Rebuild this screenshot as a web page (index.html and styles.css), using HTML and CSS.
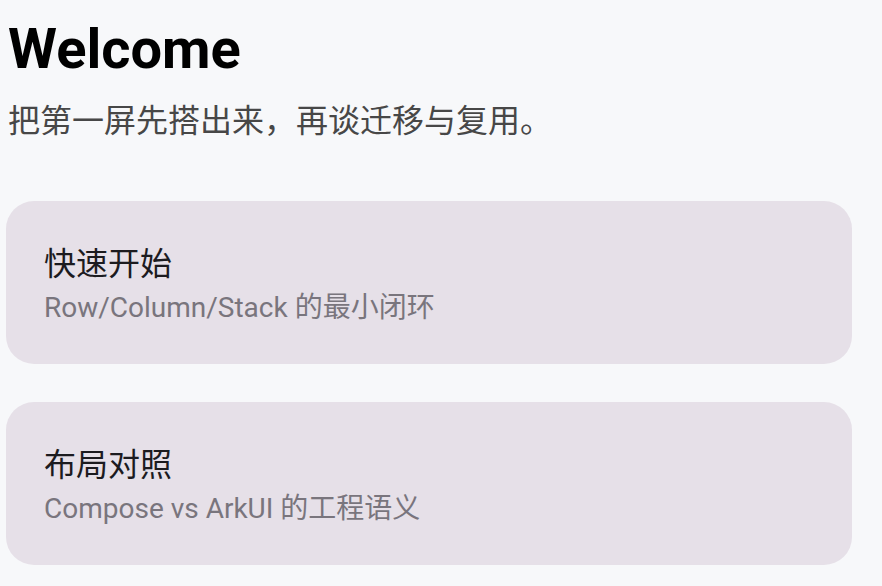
FILE: index.html
```html
<!DOCTYPE html>
<html lang="zh-CN">

<head>
    <meta charset="UTF-8">
    <meta name="viewport" content="width=device-width, initial-scale=1.0">
    <title>Welcome</title>
    <link rel="stylesheet" href="styles.css">
</head>

<body>
    <div class="screen">
        <header class="intro">
            <h1 class="title">Welcome</h1>
            <p class="subtitle">把第一屏先搭出来，再谈迁移与复用。</p>
        </header>

        <div class="cards">
            <div class="card">
                <h3>快速开始</h3>
                <p>Row/Column/Stack 的最小闭环</p>
            </div>
            <div class="card">
                <h3>布局对照</h3>
                <p>Compose vs ArkUI 的工程语义</p>
            </div>
        </div>
    </div>
</body>

</html>
```

FILE: styles.css
```css
* {
    box-sizing: border-box;
    margin: 0;
    padding: 0;
}

body {
    background-color: #f7f8fa;
    font-family: Roboto, "Noto Sans CJK SC", sans-serif;
    min-height: 100vh;
    overflow: hidden;
}

.screen {
    display: flex;
    flex-direction: column;
    padding: 16px 30px 0 6px;
}

.intro {
    padding-left: 2px;
}

.title {
    font-size: 56px;
    font-weight: 700;
    line-height: 1.2;
    color: #000;
}

.subtitle {
    margin-top: 18px;
    font-size: 32px;
    line-height: 1.3;
    color: #474747;
}

.cards {
    display: flex;
    flex-direction: column;
    gap: 38px;
    margin-top: 58px;
}

.card {
    height: 163px;
    display: flex;
    flex-direction: column;
    justify-content: center;
    gap: 4px;
    padding: 6px 38px 0;
    border-radius: 28px;
    background-color: #e6e0e8;
}

.card h3 {
    font-size: 32px;
    font-weight: 400;
    line-height: 1.3;
    color: #1c1b1f;
}

.card p {
    font-size: 28px;
    line-height: 1.3;
    color: #79757d;
}
```
